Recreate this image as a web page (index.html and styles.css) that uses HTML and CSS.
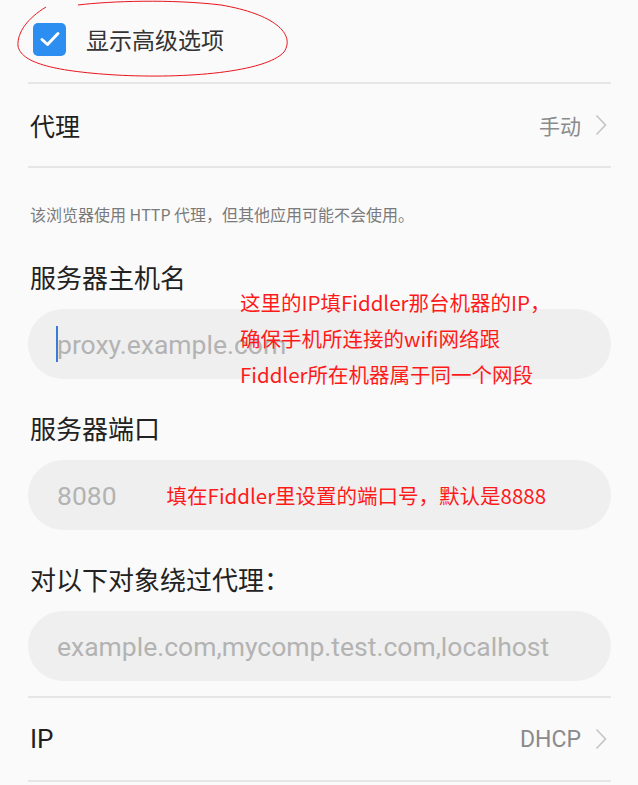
FILE: index.html
```html
<!DOCTYPE html>
<html lang="zh-CN">
<head>
<meta charset="utf-8">
<link rel="stylesheet" href="styles.css">
</head>
<body>
<div class="page">
  <svg class="ring" width="280" height="80" viewBox="0 0 280 80"><path d="M30 7 C12 18 1 32 2 46 C5 62 34 71 100 75 C170 79 250 72 268 52 C280 34 258 14 205 5 C155 -1 95 1 62 5" fill="none" stroke="#e8141c" stroke-width="1"/></svg>
  <div class="check-row">
    <span class="box"><svg width="22" height="18" viewBox="0 0 22 18"><path d="M3 9.5 L8.5 14.5 L19 3.5" fill="none" stroke="#fff" stroke-width="3" stroke-linecap="round" stroke-linejoin="round"/></svg></span>
    <span class="check-label">显示高级选项</span>
  </div>
  <div class="row">
    <span class="row-title">代理</span>
    <span class="row-value">手动<svg class="chev" width="12" height="22" viewBox="0 0 12 22"><path d="M1.5 1.5 L10.5 11 L1.5 20.5" fill="none" stroke="#c4c4c4" stroke-width="1.6"/></svg></span>
  </div>
  <p class="note">该浏览器使用 HTTP 代理，但其他应用可能不会使用。</p>

  <div class="field field-first">
    <div class="label">服务器主机名</div>
    <div class="input"><span class="caret"></span><span class="ph">proxy.example.com</span></div>
    <div class="anno anno-multi">这里的IP填Fiddler那台机器的IP，<br>确保手机所连接的wifi网络跟<br>Fiddler所在机器属于同一个网段</div>
  </div>

  <div class="field">
    <div class="label">服务器端口</div>
    <div class="input"><span class="ph">8080</span><span class="anno anno-inline">填在Fiddler里设置的端口号，默认是8888</span></div>
  </div>

  <div class="field">
    <div class="label">对以下对象绕过代理：</div>
    <div class="input"><span class="ph">example.com,mycomp.test.com,localhost</span></div>
  </div>

  <div class="row row-last">
    <span class="row-title latin">IP</span>
    <span class="row-value latin">DHCP<svg class="chev" width="12" height="22" viewBox="0 0 12 22"><path d="M1.5 1.5 L10.5 11 L1.5 20.5" fill="none" stroke="#c4c4c4" stroke-width="1.6"/></svg></span>
  </div>
</div>
</body>
</html>
```

FILE: styles.css
```css
* { box-sizing: border-box; }
html, body { margin: 0; padding: 0; }
body {
  background: #fafafa;
  font-family: "Noto Sans CJK SC", "Noto Sans", sans-serif;
  color: #222;
  width: 638px;
  height: 785px;
  overflow: hidden;
}
.page {
  position: relative;
  padding: 0 27px 0 28px;
}
.ring {
  position: absolute;
  left: 16px;
  top: 0;
}
.check-row {
  display: flex;
  align-items: center;
  height: 84px;
  padding-left: 5px;
  padding-bottom: 4px;
  border-bottom: 2px solid #e6e6e6;
}
.box {
  width: 33px;
  height: 33px;
  border-radius: 5px;
  background: #2b8ef0;
  display: flex;
  align-items: center;
  justify-content: center;
}
.check-label {
  margin-left: 20px;
  font-size: 23px;
  color: #333;
}
.row {
  display: flex;
  align-items: center;
  justify-content: space-between;
  height: 84px;
  border-bottom: 2px solid #e6e6e6;
  padding: 0 4px 0 2px;
}
.row-title {
  font-size: 25px;
  color: #1e1e1e;
}
.row-value {
  display: flex;
  align-items: center;
  font-size: 21px;
  color: #8a8a8a;
}
.chev { margin-left: 14px; }
.latin { font-family: Roboto, "Noto Sans CJK SC", sans-serif; }
.row-title.latin { font-size: 26px; }
.row-value.latin { font-size: 23px; }
.note {
  margin: 0;
  padding: 34px 0 0 2px;
  font-size: 16px;
  color: #7a7a7a;
  line-height: 24px;
}
.field {
  position: relative;
  padding-top: 31px;
}
.field-first { padding-top: 33px; }
.label {
  font-size: 26px;
  line-height: 36px;
  padding-left: 2px;
  color: #222;
}
.input {
  position: relative;
  margin-top: 14px;
  height: 70px;
  border-radius: 35px;
  background: #efefef;
  display: flex;
  align-items: center;
  padding-left: 29px;
}
.ph {
  font-family: Roboto, "Noto Sans", sans-serif;
  font-size: 26.5px;
  color: #b3b3b3;
}
.caret {
  position: absolute;
  left: 28px;
  top: 17px;
  width: 2px;
  height: 36px;
  background: #3a7bd5;
}
.anno {
  color: #ff1a1a;
  font-family: "Noto Sans CJK SC", sans-serif;
  font-size: 20.5px;
}
.anno-multi {
  position: absolute;
  left: 212px;
  top: 58px;
  line-height: 36px;
}
.anno-inline {
  margin-left: 50px;
}
.row-last {
  margin-top: 15px;
  border-top: 2px solid #e6e6e6;
  height: 86px;
}
```
